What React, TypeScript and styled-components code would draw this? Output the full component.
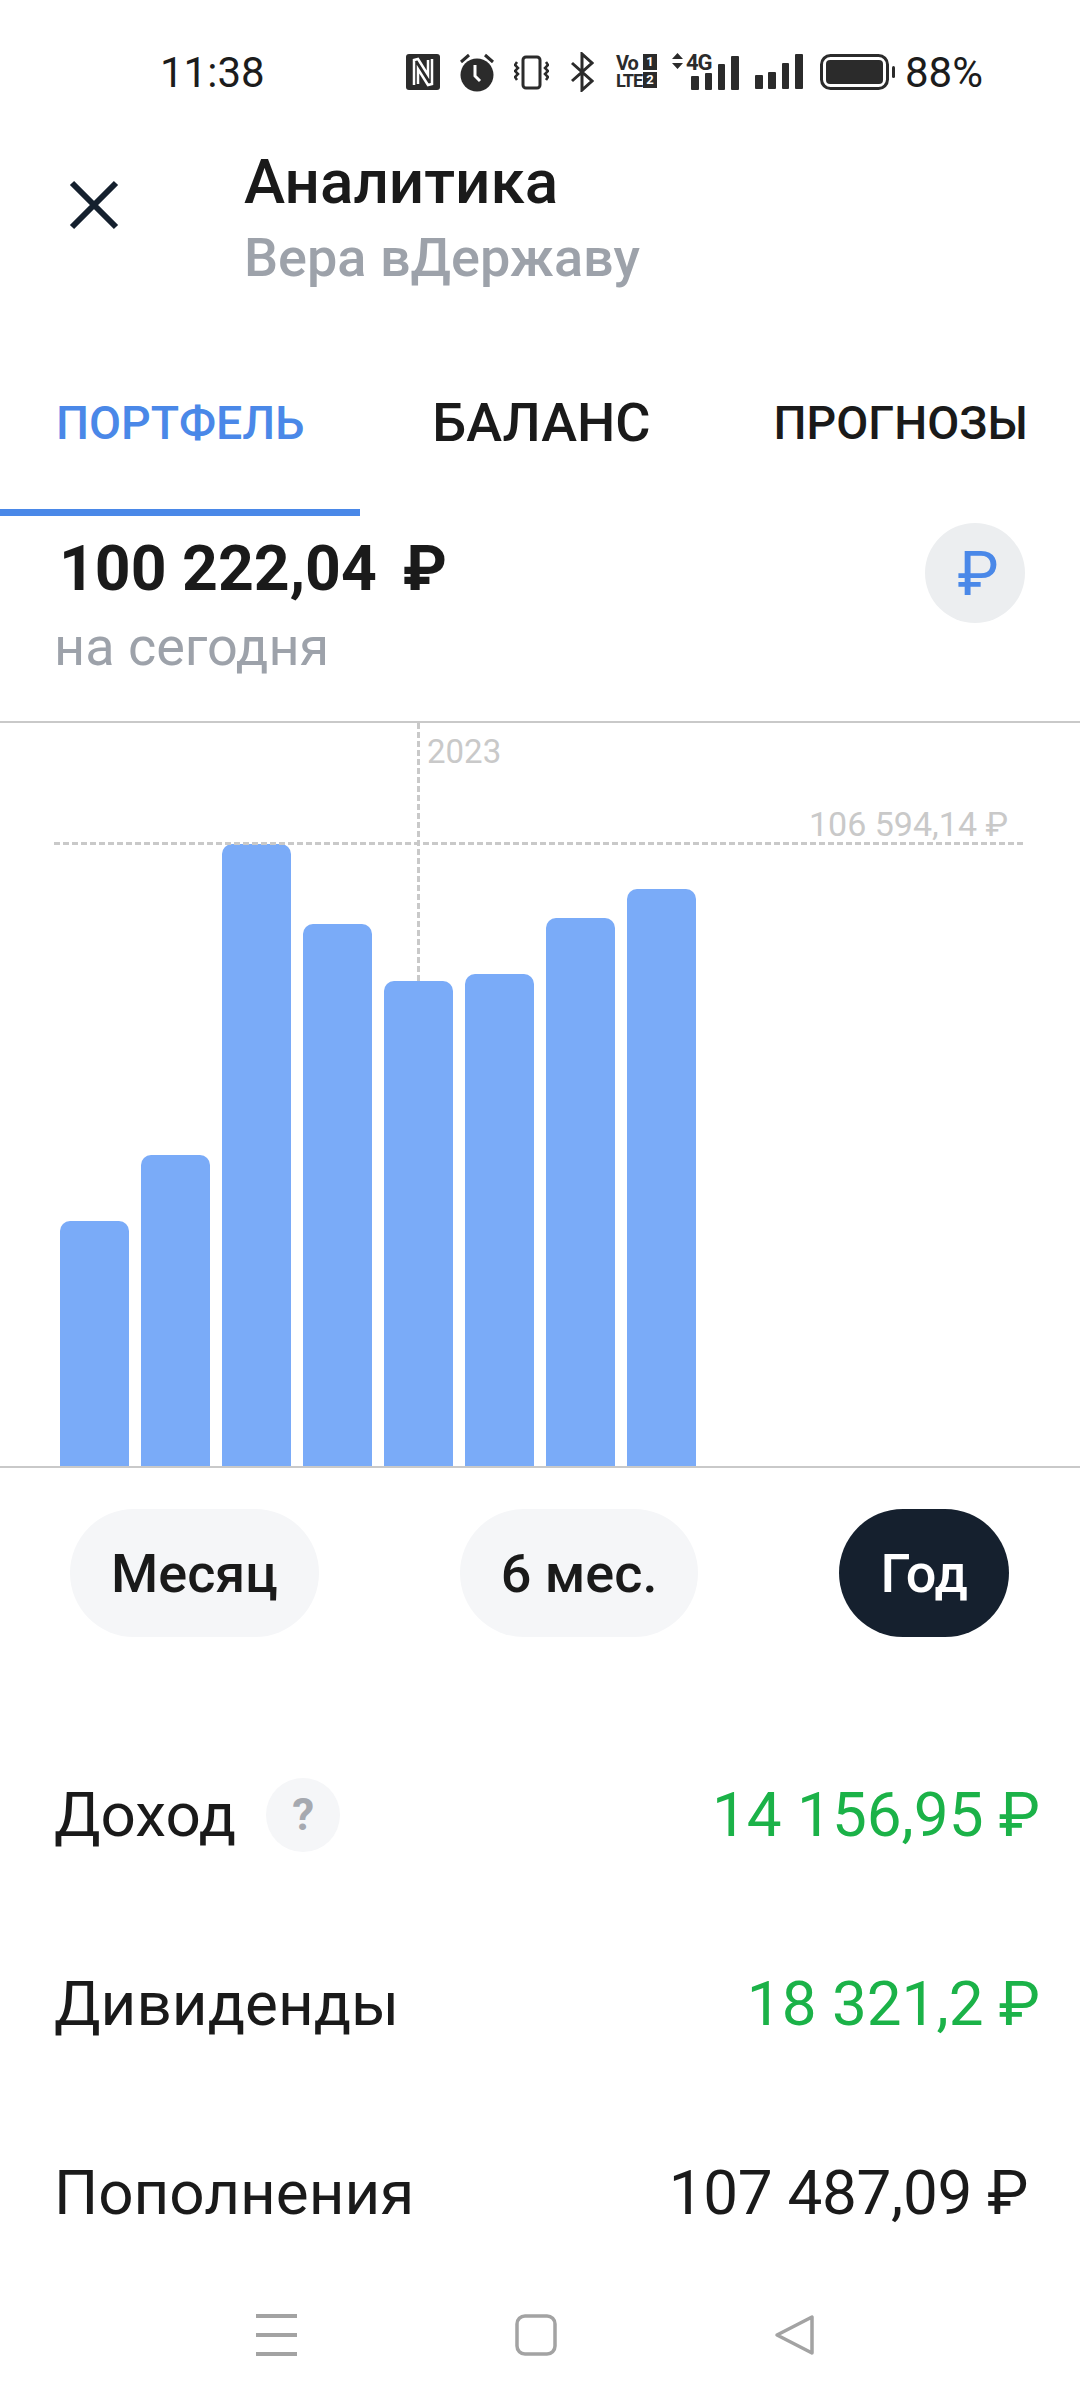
import React from 'react';
import styled, { createGlobalStyle } from 'styled-components';

const GlobalStyle = createGlobalStyle`
    html, body {
        margin: 0;
        padding: 0;
        background: #ffffff;
    }
    * {
        box-sizing: border-box;
    }
`;

const Screen = styled.div`
    position: relative;
    width: 1080px;
    height: 2400px;
    display: flex;
    flex-direction: column;
    overflow: hidden;
    background: #ffffff;
    color: #1a1a1a;
    font-family: Roboto, "Liberation Sans", sans-serif;
`;

const StatusBar = styled.div`
    height: 143px;
    flex: none;
    display: flex;
    align-items: flex-start;
    padding: 50px 0 0 160px;
`;

const StatusRow = styled.div`
    display: flex;
    align-items: center;
    height: 46px;
`;

const Clock = styled.span`
    font-size: 42px;
    line-height: 46px;
    width: 246px;
    color: #1c1c1c;
`;

const StatusIcon = styled.svg<{ $gap: number }>`
    flex: none;
    margin-left: ${props => props.$gap}px;
    margin-top: -2px;
    color: #2b2b2b;
`;

const VolteGrid = styled.div`
    flex: none;
    width: 41px;
    height: 36px;
    margin-left: 22px;
    margin-top: -2px;
    display: grid;
    grid-template-columns: 27px 14px;
    grid-template-rows: 18px 18px;
    color: #2b2b2b;
    font-weight: 700;
`;

const VolteLabel = styled.span<{ $size: number }>`
    font-size: ${props => props.$size}px;
    line-height: 18px;
    letter-spacing: -1px;
    white-space: nowrap;
`;

const SimBox = styled.span`
    height: 16px;
    background: #2b2b2b;
    color: #ffffff;
    font-size: 13px;
    line-height: 16px;
    text-align: center;
`;

const DataIcon = styled.div`
    position: relative;
    flex: none;
    width: 67px;
    height: 38px;
    margin-left: 15px;
    margin-top: -2px;
`;

const DataLabel = styled.span`
    position: absolute;
    left: 14px;
    top: -1px;
    font-size: 22px;
    font-weight: 700;
    line-height: 22px;
    letter-spacing: -1px;
    color: #2b2b2b;
`;

const BatteryText = styled.span`
    font-size: 42px;
    line-height: 46px;
    margin-left: 9px;
    color: #1c1c1c;
`;

const Header = styled.div`
    height: 137px;
    flex: none;
    display: flex;
    align-items: flex-start;
    padding-left: 69px;
`;

const CloseButton = styled.svg`
    flex: none;
    margin-top: 37px;
`;

const HeaderText = styled.div`
    margin-left: 125px;
    display: flex;
    flex-direction: column;
`;

const Title = styled.div`
    font-size: 62px;
    font-weight: 500;
    line-height: 76px;
    margin-top: 1px;
`;

const Subtitle = styled.div`
    font-size: 54px;
    font-weight: 500;
    line-height: 76px;
    color: #9da2aa;
`;

const Tabs = styled.div`
    height: 236px;
    flex: none;
    display: flex;
    align-items: flex-start;
    position: relative;
    padding-top: 100px;
`;

const Tab = styled.div<{ $active?: boolean; $size: number; $left: number }>`
    font-size: ${props => props.$size}px;
    font-weight: 500;
    line-height: 86px;
    margin-left: ${props => props.$left}px;
    color: ${props => (props.$active ? '#4a88e8' : '#1a1a1a')};
`;

const TabUnderline = styled.div`
    position: absolute;
    left: 0;
    top: 229px;
    width: 360px;
    height: 7px;
    background: #4a88e8;
`;

const Summary = styled.div`
    height: 205px;
    flex: none;
    display: flex;
    justify-content: space-between;
    align-items: flex-start;
    padding: 0 55px 0 54px;
`;

const SummaryText = styled.div`
    display: flex;
    flex-direction: column;
`;

const Amount = styled.div`
    font-size: 62.500px;
    font-weight: 700;
    line-height: 80px;
    margin: 13px 0 0 5px;
    color: #1a1a1a;
`;

const AmountCurrency = styled.span`
    margin-left: 26px;
`;

const AmountCaption = styled.div`
    font-size: 54px;
    line-height: 72px;
    margin-top: 2px;
    color: #9da2aa;
`;

const CurrencyBadge = styled.div`
    width: 100px;
    height: 100px;
    margin-top: 7px;
    padding-left: 6px;
    border-radius: 50%;
    background: #eceef0;
    color: #4a88e8;
    font-size: 62px;
    font-weight: 400;
    display: flex;
    align-items: center;
    justify-content: center;
`;

const Chart = styled.div`
    height: 747px;
    flex: none;
    position: relative;
    display: flex;
    align-items: flex-end;
    gap: 12px;
    padding-left: 60px;
    border-top: 2px solid #c9c9c9;
    border-bottom: 2px solid #c9c9c9;
`;

const Bar = styled.div`
    position: relative;
    width: 69px;
    flex: none;
    background: #7aabf8;
    border-radius: 10px 10px 0 0;
`;

const YearLine = styled.div`
    position: absolute;
    left: 417px;
    top: 0;
    width: 3px;
    height: 262px;
    background: repeating-linear-gradient(to bottom, #c9c9c9 0 6px, transparent 6px 9px);
`;

const YearLabel = styled.div`
    position: absolute;
    left: 427px;
    top: 9px;
    font-size: 33px;
    line-height: 40px;
    color: #c9c9c9;
`;

const MaxLine = styled.div`
    position: absolute;
    left: 54px;
    top: 119px;
    width: 970px;
    height: 3px;
    background: repeating-linear-gradient(to right, #c9c9c9 0 6px, transparent 6px 9px);
    z-index: 1;
`;

const MaxLabel = styled.div`
    position: absolute;
    right: 72px;
    top: 81px;
    font-size: 34px;
    line-height: 40px;
    color: #c9c9c9;
`;

const Periods = styled.div`
    flex: none;
    display: flex;
    justify-content: space-between;
    padding: 41px 71px 0 70px;
`;

const Period = styled.div<{ $active?: boolean }>`
    height: 128px;
    padding: 0 41px;
    border-radius: 64px;
    display: flex;
    align-items: center;
    font-size: 54px;
    font-weight: 500;
    background: ${props => (props.$active ? '#15202e' : '#f5f6f8')};
    color: ${props => (props.$active ? '#ffffff' : '#1a1a1a')};
`;

const Rows = styled.div`
    flex: none;
    display: flex;
    flex-direction: column;
    padding-top: 83px;
`;

const Row = styled.div<{ $inset: number }>`
    height: 189px;
    display: flex;
    align-items: center;
    justify-content: space-between;
    padding: 0 ${props => props.$inset}px 0 54px;
    font-size: 62px;
`;

const RowLabel = styled.div`
    display: flex;
    align-items: center;
    gap: 30px;
`;

const HelpBadge = styled.div`
    width: 74px;
    height: 74px;
    border-radius: 50%;
    background: #f5f6f8;
    color: #a6a9b0;
    font-size: 44px;
    font-weight: 700;
    display: flex;
    align-items: center;
    justify-content: center;
`;

const RowValue = styled.div<{ $green?: boolean; $tight?: boolean }>`
    color: ${props => (props.$green ? '#1bb248' : '#1a1a1a')};
    letter-spacing: ${props => (props.$tight ? '-0.3px' : 'normal')};
`;

const NavBar = styled.div`
    position: absolute;
    left: 0;
    top: 2280px;
    width: 1080px;
    height: 120px;
    display: flex;
    align-items: flex-start;
    padding: 33px 0 0 255px;
    gap: 216px;
    background: #ffffff;
`;

const bars = [245, 311, 622, 542, 485, 492, 548, 577];

const NfcIcon = () => (
    <StatusIcon $gap={0} width="34" height="36" viewBox="0 0 34 36">
        <rect width="34" height="36" rx="3" fill="currentColor" />
        <path d="M8 31V6l4-1 10 16V6M26 5v25l-4 1-10-16v15" fill="none" stroke="#fff" strokeWidth="2.500" />
    </StatusIcon>
);

const AlarmIcon = () => (
    <StatusIcon $gap={19} width="36" height="40" viewBox="0 0 36 40">
        <circle cx="18" cy="23" r="16.500" fill="currentColor" />
        <path d="M2 10l8-7M34 10l-8-7" stroke="currentColor" strokeWidth="3" fill="none" />
        <path d="M16 13v11l5 5" stroke="#fff" strokeWidth="3" fill="none" />
    </StatusIcon>
);

const VibrateIcon = () => (
    <StatusIcon $gap={19} width="35" height="36" viewBox="0 0 35 36">
        <rect x="9" y="3" width="17" height="31" rx="3" fill="none" stroke="currentColor" strokeWidth="3" />
        <path
            d="M3 8l-2 3 3 3-3 3 3 3-3 3 2 3M32 8l2 3-3 3 3 3-3 3 3 3-2 3"
            fill="none"
            stroke="currentColor"
            strokeWidth="2.500"
        />
    </StatusIcon>
);

const BluetoothIcon = () => (
    <StatusIcon $gap={21} width="24" height="40" viewBox="0 0 24 40">
        <path d="M2 11l20 18-10 9V2l10 9L2 29" fill="none" stroke="currentColor" strokeWidth="3" />
    </StatusIcon>
);

const DataBars = () => (
    <svg width="67" height="38" viewBox="0 0 67 38" color="#2b2b2b">
        <path d="M0 6l5.500-6 5.500 6zM0 10l5.500 6 5.500-6z" fill="currentColor" />
        <rect x="19" y="23" width="8" height="14" rx="1" fill="currentColor" />
        <rect x="33" y="20" width="7" height="17" rx="1" fill="currentColor" />
        <rect x="46" y="11" width="7" height="26" rx="1" fill="currentColor" />
        <rect x="59" y="3" width="8" height="34" rx="1" fill="currentColor" />
    </svg>
);

const SignalIcon = () => (
    <StatusIcon $gap={16} width="48" height="36" viewBox="0 0 48 36">
        <rect x="0" y="21" width="8" height="14" rx="1" fill="currentColor" />
        <rect x="13" y="18" width="8" height="17" rx="1" fill="currentColor" />
        <rect x="27" y="9" width="7" height="26" rx="1" fill="currentColor" />
        <rect x="40" y="0" width="8" height="35" rx="1" fill="currentColor" />
    </StatusIcon>
);

const BatteryIcon = () => (
    <StatusIcon $gap={17} width="76" height="36" viewBox="0 0 76 36">
        <rect x="1.500" y="1.500" width="66" height="33" rx="9" fill="none" stroke="currentColor" strokeWidth="3" />
        <rect x="6" y="6" width="57" height="24" rx="4" fill="currentColor" />
        <rect x="72" y="12" width="3" height="12" rx="1.500" fill="currentColor" />
    </StatusIcon>
);

const App: React.FC = () => {
    return (
        <Screen>
            <GlobalStyle />
            <StatusBar>
                <StatusRow>
                    <Clock>11:38</Clock>
                    <NfcIcon />
                    <AlarmIcon />
                    <VibrateIcon />
                    <BluetoothIcon />
                    <VolteGrid>
                        <VolteLabel $size={20}>Vo</VolteLabel>
                        <SimBox>1</SimBox>
                        <VolteLabel $size={18}>LTE</VolteLabel>
                        <SimBox>2</SimBox>
                    </VolteGrid>
                    <DataIcon>
                        <DataBars />
                        <DataLabel>4G</DataLabel>
                    </DataIcon>
                    <SignalIcon />
                    <BatteryIcon />
                    <BatteryText>88%</BatteryText>
                </StatusRow>
            </StatusBar>
            <Header>
                <CloseButton width="50" height="50" viewBox="0 0 50 50">
                    <path d="M3 3l44 44M47 3L3 47" stroke="#15202e" strokeWidth="6" fill="none" />
                </CloseButton>
                <HeaderText>
                    <Title>Аналитика</Title>
                    <Subtitle>Вера вДержаву</Subtitle>
                </HeaderText>
            </Header>
            <Tabs>
                <Tab $active $size={46.500} $left={56}>ПОРТФЕЛЬ</Tab>
                <Tab $size={54} $left={128}>БАЛАНС</Tab>
                <Tab $size={46.500} $left={123}>ПРОГНОЗЫ</Tab>
                <TabUnderline />
            </Tabs>
            <Summary>
                <SummaryText>
                    <Amount>
                        100 222,04
                        <AmountCurrency>₽</AmountCurrency>
                    </Amount>
                    <AmountCaption>на сегодня</AmountCaption>
                </SummaryText>
                <CurrencyBadge>₽</CurrencyBadge>
            </Summary>
            <Chart>
                <YearLine />
                <YearLabel>2023</YearLabel>
                <MaxLine />
                <MaxLabel>106 594,14 ₽</MaxLabel>
                {bars.map((height, index) => (
                    <Bar key={index} style={{ height }} />
                ))}
            </Chart>
            <Periods>
                <Period>Месяц</Period>
                <Period>6 мес.</Period>
                <Period $active>Год</Period>
            </Periods>
            <Rows>
                <Row $inset={40}>
                    <RowLabel>
                        Доход
                        <HelpBadge>?</HelpBadge>
                    </RowLabel>
                    <RowValue $green>14 156,95 ₽</RowValue>
                </Row>
                <Row $inset={40}>
                    <RowLabel>Дивиденды</RowLabel>
                    <RowValue $green>18 321,2 ₽</RowValue>
                </Row>
                <Row $inset={52}>
                    <RowLabel>Пополнения</RowLabel>
                    <RowValue $tight>107 487,09 ₽</RowValue>
                </Row>
            </Rows>
            <NavBar>
                <svg width="44" height="44" viewBox="0 0 44 44">
                    <path d="M1 3h41M1 22h41M1 41h41" stroke="#a3a3a3" strokeWidth="4" fill="none" />
                </svg>
                <svg width="42" height="44" viewBox="0 0 42 44">
                    <rect x="2" y="3" width="38" height="38" rx="8" stroke="#a3a3a3" strokeWidth="3.500" fill="none" />
                </svg>
                <svg width="42" height="44" viewBox="0 0 42 44">
                    <path d="M39 4v36L4 22z" stroke="#a3a3a3" strokeWidth="3.500" strokeLinejoin="round" fill="none" />
                </svg>
            </NavBar>
        </Screen>
    );
};

export default App;
